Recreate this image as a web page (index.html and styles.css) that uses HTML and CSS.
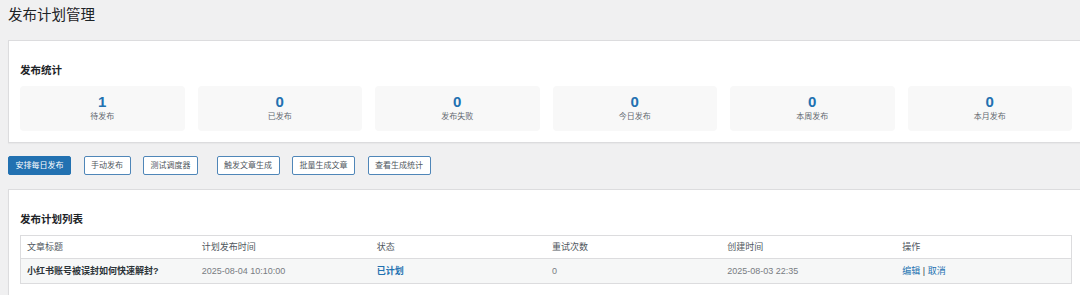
FILE: index.html
```html
<!DOCTYPE html>
<html lang="zh-CN">
<head>
<meta charset="utf-8">
<title>发布计划管理</title>
<link rel="stylesheet" href="styles.css">
</head>
<body>
<div class="wrap">
  <h1 class="page-title">发布计划管理</h1>

  <div class="card">
    <h2 class="card-title">发布统计</h2>
    <div class="stats">
      <div class="stat"><div class="stat-num">1</div><div class="stat-label">待发布</div></div>
      <div class="stat"><div class="stat-num">0</div><div class="stat-label">已发布</div></div>
      <div class="stat"><div class="stat-num">0</div><div class="stat-label">发布失败</div></div>
      <div class="stat"><div class="stat-num">0</div><div class="stat-label">今日发布</div></div>
      <div class="stat"><div class="stat-num">0</div><div class="stat-label">本周发布</div></div>
      <div class="stat"><div class="stat-num">0</div><div class="stat-label">本月发布</div></div>
    </div>
  </div>

  <div class="actions">
    <button class="btn btn-primary">安排每日发布</button>
    <button class="btn">手动发布</button>
    <button class="btn btn-wide-gap">测试调度器</button>
    <button class="btn">触发文章生成</button>
    <button class="btn">批量生成文章</button>
    <button class="btn">查看生成统计</button>
  </div>

  <div class="card">
    <h2 class="card-title">发布计划列表</h2>
    <table class="plan-table">
      <thead>
        <tr>
          <th>文章标题</th>
          <th>计划发布时间</th>
          <th>状态</th>
          <th>重试次数</th>
          <th>创建时间</th>
          <th>操作</th>
        </tr>
      </thead>
      <tbody>
        <tr>
          <td class="cell-title">小红书账号被误封如何快速解封?</td>
          <td class="cell-muted">2025-08-04 10:10:00</td>
          <td class="cell-status">已计划</td>
          <td class="cell-muted">0</td>
          <td class="cell-muted">2025-08-03 22:35</td>
          <td><a class="link" href="#">编辑</a><span class="sep"> | </span><a class="link" href="#">取消</a></td>
        </tr>
      </tbody>
    </table>
  </div>
</div>
</body>
</html>
```

FILE: styles.css
```css
html, body {
  margin: 0;
  padding: 0;
  overflow: hidden;
  background: #f0f0f1;
}

body {
  font-family: "Liberation Sans", "Noto Sans CJK SC", sans-serif;
  color: #3c434a;
}

.wrap {
  padding-left: 8px;
}

.page-title {
  margin: 0;
  padding-top: 5px;
  font-size: 14.5px;
  line-height: 20px;
  font-weight: 400;
  color: #1d2327;
}

.card {
  margin-top: 15px;
  margin-right: -4px;
  background: #fff;
  border: 1px solid #dcdcde;
  padding: 22px 11px 11px;
  box-shadow: 0 1px 1px rgba(0, 0, 0, 0.03);
}

.card-title {
  margin: 0 0 9px;
  font-size: 10.5px;
  line-height: 14px;
  font-weight: 700;
  color: #1d2327;
}

.stats {
  display: grid;
  grid-template-columns: repeat(6, 1fr);
  gap: 13px;
}

.stat {
  background: #f8f8f8;
  border-radius: 4px;
  padding: 7px 0 9px;
  text-align: center;
}

.stat-num {
  font-size: 15px;
  line-height: 18px;
  font-weight: 700;
  color: #2271b1;
}

.stat-label {
  font-size: 8px;
  line-height: 11px;
  color: #646970;
}

.actions {
  display: flex;
  margin-top: 13px;
  margin-bottom: -1px;
}

.btn {
  font-family: inherit;
  font-size: 8px;
  line-height: 17px;
  height: 19px;
  padding: 0 6.5px;
  margin: 0 12.5px 0 0;
  border: 1px solid #4f86b8;
  border-radius: 2px;
  background: #fff;
  color: #50575e;
  cursor: pointer;
}

.btn-primary {
  background: #2271b1;
  border-color: #2271b1;
  color: #fff;
}

.btn-wide-gap {
  margin-right: 18.5px;
}

.plan-table {
  width: 100%;
  border-collapse: collapse;
  table-layout: fixed;
  border: 1px solid #dcdcde;
  font-size: 9px;
}

.plan-table th {
  text-align: left;
  font-weight: 400;
  color: #50575e;
  line-height: 12px;
  padding: 5px 6px;
  border-bottom: 1px solid #dcdcde;
  background: #fff;
}

.plan-table td {
  line-height: 12px;
  padding: 6px 6px;
  background: #f6f7f7;
  color: #787c82;
}

.plan-table td.cell-title {
  font-weight: 700;
  color: #2c3338;
}

.plan-table td.cell-status {
  font-weight: 700;
  color: #2271b1;
}

.link {
  color: #2271b1;
  text-decoration: none;
}

.sep {
  color: #3c434a;
}
```
